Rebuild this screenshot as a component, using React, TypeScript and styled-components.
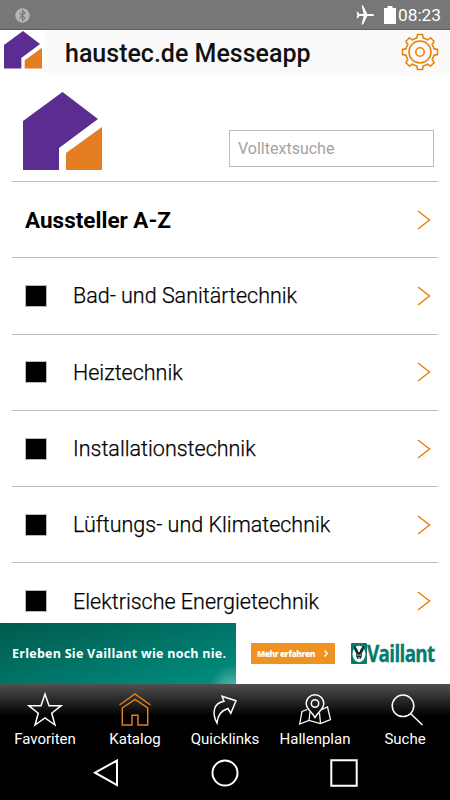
import React from 'react';
import styled, { createGlobalStyle } from 'styled-components';

const Global = createGlobalStyle`
  * { box-sizing: border-box; }
  body { margin: 0; background: #fff; font-family: Roboto, "Liberation Sans", sans-serif; }
  svg { display: block; flex: none; }
`;

const Screen = styled.div`
  width: 450px;
  height: 800px;
  display: flex;
  flex-direction: column;
  overflow: hidden;
  background: #fff;
`;

const StatusBar = styled.div`
  height: 30px;
  flex: none;
  display: flex;
  align-items: center;
  background: #777;
  border-bottom: 1px solid #5c5c5c;
  padding: 1px 9px 0 15px;
`;

const StatusRight = styled.div`
  margin-left: auto;
  display: flex;
  align-items: center;
`;

const Clock = styled.span`
  width: 43px;
  margin-left: 2px;
  color: #fff;
  font-size: 17.3px;
  line-height: 28px;
  white-space: nowrap;
`;

const Header = styled.header`
  height: 43px;
  flex: none;
  display: flex;
  align-items: center;
  background: #fafafa;
  padding-right: 11px;
`;

const HeaderLogo = styled.div`
  width: 44px;
  height: 43px;
  background: #fff;
  padding: 1px 0 0 4px;
`;

const Title = styled.h1`
  margin: 4px auto 0 21px;
  color: #111;
  font-size: 25px;
  font-weight: 500;
  line-height: 41px;
  white-space: nowrap;
`;

const Main = styled.main`
  height: 550px;
  flex: none;
  padding: 0 12px;
  overflow: hidden;
`;

const SearchPanel = styled.section`
  height: 108px;
  display: flex;
  justify-content: space-between;
  padding: 19px 4px 0 11px;
`;

const SearchInput = styled.input`
  width: 205px;
  height: 37px;
  margin-top: 38px;
  padding: 0 8px;
  border: 1px solid #bcbcbc;
  border-radius: 0;
  background: #fff;
  color: #222;
  font: 400 16px Roboto, sans-serif;
  outline: none;
  &::placeholder { color: #a3a3a3; opacity: 1; }
`;

const Row = styled.div<{ $strong?: boolean }>`
  height: 76.3px;
  display: flex;
  align-items: center;
  border-top: 1px solid #bdbdbd;
  padding: 0 7px 0 13px;
  color: #000;
  font-size: ${p => (p.$strong ? 22.5 : 21.5)}px;
  font-weight: ${p => (p.$strong ? 700 : 300)};
  -webkit-text-stroke: ${p => (p.$strong ? 0 : 0.25)}px #000;
  white-space: nowrap;
`;

const Marker = styled.span`
  width: 22px;
  height: 22px;
  margin-right: 26px;
  background: #000;
  border: 1px solid #bbb;
`;

const RowLabel = styled.span`
  margin-right: auto;
`;

const Banner = styled.aside`
  height: 61px;
  flex: none;
  display: flex;
  align-items: center;
  background: #fff;
`;

const Slogan = styled.div`
  width: 236px;
  height: 61px;
  display: flex;
  align-items: center;
  padding-left: 12px;
  background:
    radial-gradient(circle at 232px 64px, rgba(120, 200, 190, 0.7), transparent 22px),
    linear-gradient(165deg, #005b4e 0%, #006f62 40%, #008477 80%, #078e80 100%);
  color: #fff;
  font: 700 12.5px "Open Sans", sans-serif;
  letter-spacing: 0.26px;
  white-space: nowrap;
`;

const MoreButton = styled.button`
  width: 84px;
  height: 21px;
  margin-left: 15px;
  padding: 0 7px 0 6px;
  display: flex;
  align-items: center;
  justify-content: space-between;
  border: 0;
  background: #ef9222;
  color: #fff;
  font: 800 8.5px "Open Sans", sans-serif;
  letter-spacing: -0.46px;
  white-space: nowrap;
`;

const Brand = styled.div`
  margin-left: 16px;
  display: flex;
  align-items: center;
  color: #087b6c;
`;

const BrandName = styled.span`
  width: 68px;
  font: 700 23px "Open Sans", sans-serif;
  line-height: 24px;
  letter-spacing: -0.8px;
  transform: translateY(-1px) scaleX(0.82);
  transform-origin: left;
  -webkit-text-stroke: 0.4px #087b6c;
  white-space: nowrap;
`;

const Footer = styled.footer`
  height: 116px;
  flex: none;
  background: linear-gradient(#505050 0, #292929 16px, #000 32px);
`;

const Tabs = styled.nav`
  height: 66px;
  display: grid;
  grid-template-columns: repeat(5, 90px);
`;

const Tab = styled.div`
  display: flex;
  flex-direction: column;
  align-items: center;
  padding-top: 7px;
  color: #fff;
`;

const TabLabel = styled.span`
  margin-top: 2px;
  font-size: 15px;
  line-height: 20px;
  white-space: nowrap;
`;

const SystemNav = styled.div`
  height: 50px;
  display: flex;
  justify-content: space-between;
  padding: 9px 92px 0 91px;
`;

const HouseLogo = ({ size }: { size: number }) => (
  <svg width={size} height={size} viewBox="0 0 79 79">
    <path d="M0 29 39.5 0 75 27 36 56V78H0Z" fill="#5b2d91" />
    <path d="M43 61 79 35V78H43Z" fill="#e57e22" />
  </svg>
);

const Chevron = () => (
  <svg width="14" height="20" viewBox="0 0 14 20" fill="none" stroke="#e98012" strokeWidth="1.5">
    <path d="M1 1 12.5 10 1 19" />
  </svg>
);

const Gear = () => (
  <svg width="38" height="38" viewBox="-19 -19 38 38" fill="none" stroke="#e8820e" strokeWidth="1.6" strokeLinejoin="round">
    <path d="M-2.6-17.5H2.6L3.1-14A13.8 13.8 0 0 1 7.6-12.1L10.5-14.2 14.2-10.5 12.1-7.6A13.8 13.8 0 0 1 14-3.1L17.5-2.6V2.6L14 3.1A13.8 13.8 0 0 1 12.1 7.6L14.2 10.5 10.5 14.2 7.6 12.1A13.8 13.8 0 0 1 3.1 14L2.6 17.5H-2.6L-3.1 14A13.8 13.8 0 0 1-7.6 12.1L-10.5 14.2-14.2 10.5-12.1 7.6A13.8 13.8 0 0 1-14 3.1L-17.5 2.6V-2.6L-14-3.1A13.8 13.8 0 0 1-12.1-7.6L-14.2-10.5-10.5-14.2-7.6-12.1A13.8 13.8 0 0 1-3.1-14Z" />
    <circle r="11" />
    <circle r="4.2" />
  </svg>
);

const Bluetooth = () => (
  <svg width="15" height="15" viewBox="0 0 15 15" fill="none">
    <circle cx="7.5" cy="7.5" r="7.2" fill="#b5b5b5" />
    <path d="M4.3 4.7 10 10 7.5 12.5V2.5L10 5 4.3 10.3" stroke="#777" strokeWidth="1.1" />
  </svg>
);

const Plane = () => (
  <svg width="18" height="20" viewBox="0 0 18 20" fill="#fff">
    <path d="M18 10C18 9.2 17.3 8.9 16.5 8.9H11.3L7 .5H5.6L7.6 8.9H3.4L1.8 6.8H.6L1.4 10 .6 13.2H1.8L3.4 11.1H7.6L5.6 19.5H7L11.3 11.1H16.5C17.3 11.1 18 10.8 18 10Z" />
  </svg>
);

const Battery = () => (
  <svg width="12" height="18" viewBox="0 0 12 18" fill="#fff">
    <path d="M3.5 0H8.5V2H12V18H0V2H3.5Z" />
  </svg>
);

const StatusGap = styled.span`
  width: 10px;
`;

const Hare = () => (
  <svg width="16" height="21" viewBox="0 0 16 21">
    <rect width="16" height="21" rx="1" fill="#087b6c" />
    <ellipse cx="8" cy="11" rx="6.5" ry="8.3" fill="#fff" />
    <path d="M3 3C4 3 7 6 7.3 9H8.7C9 6 12 3 13 3 13.4 6 12 9 10.6 10.5L11 13 9.5 16H6.5L5 13 5.4 10.5C4 9 2.6 6 3 3Z" fill="#16302c" />
    <path d="M6.2 12.2H7.5M8.5 12.2H9.8M7 15H9" stroke="#fff" strokeWidth="1" />
  </svg>
);

const TabIcon = ({ name }: { name: string }) => (
  <svg width="36" height="36" viewBox="0 0 36 36" fill="none" stroke={name === 'Katalog' ? '#df7d20' : '#fff'} strokeWidth="1.5">
    {name === 'Favoriten' && <path d="M18 3 22 14.8H34L24.7 22.2 28 34 18 27 8 34 11.3 22.2 2 14.8H14Z" />}
    {name === 'Katalog' && (
      <>
        <path d="M2.5 14 18 3 33.5 14" />
        <path d="M5.3 17 18 8.3 30.7 17V34H21V24.3H15V34H5.3Z" />
      </>
    )}
    {name === 'Quicklinks' && <path d="M10 32C5 23 6 12 17 10.3L15 5.2 29 9.7 23.8 22.3 21 17.5C14 19.5 10.5 25 10 32Z" />}
    {name === 'Hallenplan' && (
      <>
        <path d="M18 26.5C14.5 20.5 9.2 18 9.2 12.5A8.8 8.8 0 0 1 26.8 12.5C26.8 18 21.5 20.5 18 26.5Z" />
        <circle cx="18" cy="12.5" r="3.7" />
        <path d="M10 18.5 5 20.5 2.7 33 12 29.5 23.5 32.5 33.5 28.5 30.5 16 25 18.5M13 21 12 29.5M22.5 22 23.5 32.5" strokeWidth="1.25" />
      </>
    )}
    {name === 'Suche' && (
      <>
        <circle cx="16" cy="14.8" r="10.8" />
        <path d="M23.5 22.5 35.5 34" />
      </>
    )}
  </svg>
);

const categories = [
  'Bad- und Sanitärtechnik',
  'Heiztechnik',
  'Installationstechnik',
  'Lüftungs- und Klimatechnik',
  'Elektrische Energietechnik',
];
const tabs = ['Favoriten', 'Katalog', 'Quicklinks', 'Hallenplan', 'Suche'];

export default function App() {
  return (
    <Screen>
      <Global />
      <StatusBar>
        <Bluetooth />
        <StatusRight>
          <Plane />
          <StatusGap />
          <Battery />
          <Clock>08:23</Clock>
        </StatusRight>
      </StatusBar>
      <Header>
        <HeaderLogo><HouseLogo size={38} /></HeaderLogo>
        <Title>haustec.de Messeapp</Title>
        <Gear />
      </Header>
      <Main>
        <SearchPanel>
          <HouseLogo size={79} />
          <SearchInput placeholder="Volltextsuche" />
        </SearchPanel>
        <Row $strong>
          <RowLabel>Aussteller A-Z</RowLabel>
          <Chevron />
        </Row>
        {categories.map(label => (
          <Row key={label}>
            <Marker />
            <RowLabel>{label}</RowLabel>
            <Chevron />
          </Row>
        ))}
      </Main>
      <Banner>
        <Slogan>Erleben Sie Vaillant wie noch nie.</Slogan>
        <MoreButton>
          Mehr erfahren
          <svg width="4" height="7" viewBox="0 0 4 7" fill="none" stroke="#fff" strokeWidth="1.3"><path d="M.5.5 3.3 3.5.5 6.5" /></svg>
        </MoreButton>
        <Brand><Hare /><BrandName>Vaillant</BrandName></Brand>
      </Banner>
      <Footer>
        <Tabs>
          {tabs.map(t => <Tab key={t}><TabIcon name={t} /><TabLabel>{t}</TabLabel></Tab>)}
        </Tabs>
        <SystemNav>
          <svg width="28" height="28" viewBox="0 0 28 28" fill="none" stroke="#fff" strokeWidth="2"><path d="M26 1.5V26L4 13.7Z" /></svg>
          <svg width="28" height="28" viewBox="0 0 28 28" fill="none" stroke="#fff" strokeWidth="2"><circle cx="14" cy="14" r="12.5" /></svg>
          <svg width="28" height="28" viewBox="0 0 28 28" fill="none" stroke="#fff" strokeWidth="2"><path d="M1.3 1.3H26.7V26.7H1.3Z" /></svg>
        </SystemNav>
      </Footer>
    </Screen>
  );
}
